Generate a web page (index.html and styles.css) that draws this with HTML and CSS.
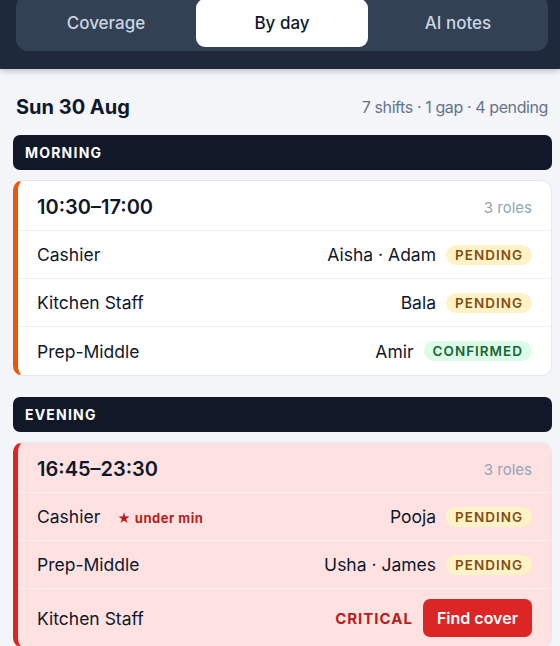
FILE: index.html
```html
<!DOCTYPE html>
<html lang="en">
<head>
    <meta charset="UTF-8">
    <meta name="viewport" content="width=device-width, initial-scale=1.0">
    <title>Rota - By day</title>
    <link rel="stylesheet" href="styles.css">
</head>
<body>

    <div class="topbar">
        <div class="tabs">
            <button class="tab">Coverage</button>
            <button class="tab active">By day</button>
            <button class="tab">AI notes</button>
        </div>
    </div>

    <div class="page">
        <div class="day-head">
            <h2>Sun 30 Aug</h2>
            <span class="summary">7 shifts · 1 gap · 4 pending</span>
        </div>

        <div class="period">MORNING</div>
        <div class="shift morning">
            <div class="shift-head">
                <span class="time">10:30–17:00</span>
                <span class="roles">3 roles</span>
            </div>
            <div class="row">
                <span class="role">Cashier</span>
                <div class="right">
                    <span class="names">Aisha · Adam</span>
                    <span class="badge pending">PENDING</span>
                </div>
            </div>
            <div class="row">
                <span class="role">Kitchen Staff</span>
                <div class="right">
                    <span class="names">Bala</span>
                    <span class="badge pending">PENDING</span>
                </div>
            </div>
            <div class="row">
                <span class="role">Prep-Middle</span>
                <div class="right">
                    <span class="names">Amir</span>
                    <span class="badge confirmed">CONFIRMED</span>
                </div>
            </div>
        </div>

        <div class="period">EVENING</div>
        <div class="shift evening">
            <div class="shift-head">
                <span class="time">16:45–23:30</span>
                <span class="roles">3 roles</span>
            </div>
            <div class="row">
                <span class="role">Cashier <span class="warn">★ under min</span></span>
                <div class="right">
                    <span class="names">Pooja</span>
                    <span class="badge pending">PENDING</span>
                </div>
            </div>
            <div class="row">
                <span class="role">Prep-Middle</span>
                <div class="right">
                    <span class="names">Usha · James</span>
                    <span class="badge pending">PENDING</span>
                </div>
            </div>
            <div class="row tall">
                <span class="role">Kitchen Staff</span>
                <div class="right">
                    <span class="critical">CRITICAL</span>
                    <button class="cover-btn">Find cover</button>
                </div>
            </div>
        </div>
    </div>

</body>
</html>
```

FILE: styles.css
```css
* {
    margin: 0;
    padding: 0;
    box-sizing: border-box;
    font-family: Inter, "Noto Sans", sans-serif;
}
body {
    background-color: #f4f5f9;
    color: #0f172a;
    overflow: hidden;
}
/* Top bar with tabs */
.topbar {
    background: #1e293b;
    padding: 0 12px 18px 16px;
    box-shadow: 0 2px 6px rgba(15, 23, 42, 0.25);
}
.tabs {
    margin-top: -5px;
    background: #334155;
    border-radius: 12px;
    padding: 4px;
    display: flex;
    gap: 4px;
}
.tab {
    flex: 1;
    height: 48px;
    border: none;
    border-radius: 9px;
    background: transparent;
    color: #cbd5e1;
    font-size: 17px;
    font-weight: 500;
}
.tab.active {
    background: white;
    color: #0f172a;
}
.page {
    padding: 0 8px 0 13px;
}
.day-head {
    display: flex;
    justify-content: space-between;
    align-items: center;
    padding: 26px 4px 16px 3px;
}
.day-head h2 {
    font-size: 20px;
    font-weight: 700;
}
.summary {
    color: #64748b;
    font-size: 16px;
    letter-spacing: -0.4px;
}
.period {
    background: #111827;
    color: white;
    font-size: 14px;
    font-weight: 700;
    letter-spacing: 1.2px;
    height: 35px;
    line-height: 35px;
    padding-left: 12px;
    border-radius: 7px;
    margin-bottom: 10px;
}
.shift {
    background: white;
    border: 1px solid #e2e8f0;
    border-left: 5px solid #ea580c;
    border-radius: 10px;
    margin-bottom: 21px;
}
.shift.evening {
    background: #fee2e2;
    border-left-color: #dc2626;
}
.shift-head {
    display: flex;
    justify-content: space-between;
    align-items: center;
    height: 50px;
    padding: 3px 19px 0;
    border-bottom: 1px solid #eef1f6;
}
.evening .shift-head {
    border-bottom-color: #fdeeee;
}
.time {
    font-size: 20px;
    font-weight: 600;
}
.roles {
    color: #94a3b8;
    font-size: 15px;
}
.row {
    display: flex;
    justify-content: space-between;
    align-items: center;
    height: 48px;
    padding: 0 19px;
    border-bottom: 1px solid #eef1f6;
    font-size: 17.5px;
}
.evening .row {
    border-bottom-color: #fdeeee;
}
.row:last-child {
    border-bottom: none;
}
.row.tall {
    height: 58px;
}
.right {
    display: flex;
    align-items: center;
    gap: 10px;
}
.badge {
    font-size: 13.5px;
    font-weight: 600;
    letter-spacing: 1px;
    padding: 2px 9px;
    border-radius: 10px;
}
.badge.pending {
    background: #fef3c7;
    color: #854d0e;
}
.badge.confirmed {
    background: #dcfce7;
    color: #166534;
}
.warn {
    color: #b91c1c;
    font-size: 13px;
    font-weight: 700;
    letter-spacing: 0.5px;
    margin-left: 12px;
}
.critical {
    color: #b91c1c;
    font-size: 15px;
    font-weight: 700;
    letter-spacing: 1px;
}
.cover-btn {
    background: #dc2626;
    color: white;
    border: none;
    border-radius: 7px;
    height: 38px;
    padding: 0 14px;
    font-size: 16px;
    font-weight: 600;
}
```
